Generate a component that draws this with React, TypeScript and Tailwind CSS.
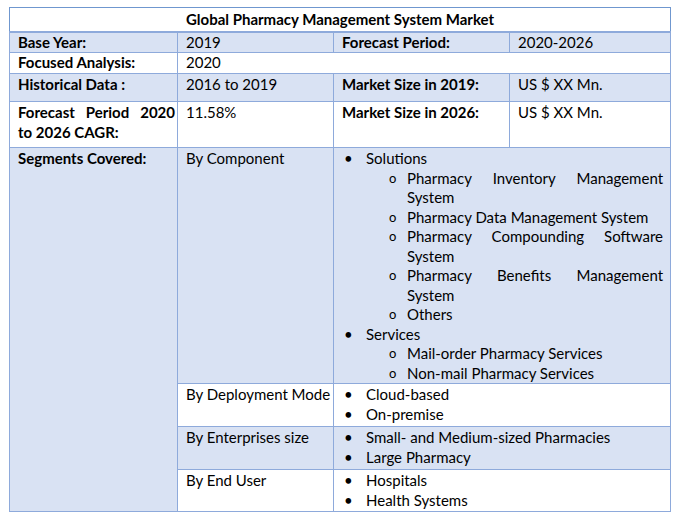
const border = 'border border-[#8eaadb]';

type Item = { text: string; sub?: string[] };

const segments: { name: string; blue: boolean; items: Item[] }[] = [
  {
    name: 'By Component',
    blue: true,
    items: [
      {
        text: 'Solutions',
        sub: [
          'Pharmacy Inventory Management System',
          'Pharmacy Data Management System',
          'Pharmacy Compounding Software System',
          'Pharmacy Benefits Management System',
          'Others',
        ],
      },
      { text: 'Services', sub: ['Mail-order Pharmacy Services', 'Non-mail Pharmacy Services'] },
    ],
  },
  { name: 'By Deployment Mode', blue: false, items: [{ text: 'Cloud-based' }, { text: 'On-premise' }] },
  {
    name: 'By Enterprises size',
    blue: true,
    items: [{ text: 'Small- and Medium-sized Pharmacies' }, { text: 'Large Pharmacy' }],
  },
  { name: 'By End User', blue: false, items: [{ text: 'Hospitals' }, { text: 'Health Systems' }] },
];

function BulletList({ items }: { items: Item[] }) {
  return (
    <div>
      {items.map((item) => (
        <div key={item.text}>
          <div className="flex">
            <span className="w-[24px] pl-[2px] shrink-0">•</span>
            <span>{item.text}</span>
          </div>
          {item.sub?.map((s) => (
            <div key={s} className="flex">
              <span className="w-[65px] pl-[47px] shrink-0 text-[13px]">o</span>
              <span className="text-justify flex-1">{s}</span>
            </div>
          ))}
        </div>
      ))}
    </div>
  );
}

export default function App() {
  return (
    <div className="bg-white min-h-screen pt-[7px] pl-[9px] text-black font-['Lato','Liberation_Sans',sans-serif] text-[15px] leading-[19.5px]">
      <table className="w-[661px] table-fixed border-collapse">
        <colgroup>
          <col className="w-[168px]" />
          <col className="w-[156px]" />
          <col className="w-[176px]" />
          <col className="w-[161px]" />
        </colgroup>
        <tbody>
          <tr>
            <td colSpan={4} className="border border-[#6f97cf] border-b-2 border-b-[#8eaadb] text-center font-bold pt-[2px] pb-[1px]">
              Global Pharmacy Management System Market
            </td>
          </tr>
          <tr className="bg-[#d9e2f3]">
            <td className={`${border} px-[8px] font-bold`}>Base Year:</td>
            <td className={`${border} px-[8px]`}>2019</td>
            <td className={`${border} px-[8px] font-bold`}>Forecast Period:</td>
            <td className={`${border} px-[8px]`}>2020-2026</td>
          </tr>
          <tr>
            <td className={`${border} px-[8px] font-bold`}>Focused Analysis:</td>
            <td colSpan={3} className={`${border} px-[8px]`}>2020</td>
          </tr>
          <tr className="bg-[#d9e2f3] align-top">
            <td className={`${border} px-[8px] pt-[1px] pb-[7px] font-bold`}>Historical Data :</td>
            <td className={`${border} px-[8px] pt-[1px] pb-[7px]`}>2016 to 2019</td>
            <td className={`${border} px-[8px] pt-[1px] pb-[7px] font-bold`}>Market Size in 2019:</td>
            <td className={`${border} px-[8px] pt-[1px] pb-[7px]`}>US $ XX Mn.</td>
          </tr>
          <tr className="align-top">
            <td className={`${border} px-[8px] pt-[1px] pb-[5px] font-bold text-justify [text-align-last:left]`}>
              Forecast&nbsp;&nbsp;&nbsp;Period&nbsp;&nbsp;&nbsp;2020 to 2026 CAGR:
            </td>
            <td className={`${border} px-[8px] pt-[1px] pb-[5px]`}>11.58%</td>
            <td className={`${border} px-[8px] pt-[1px] pb-[5px] font-bold`}>Market Size in 2026:</td>
            <td className={`${border} px-[8px] pt-[1px] pb-[5px]`}>US $ XX Mn.</td>
          </tr>
          {segments.map((seg, i) => {
            const pad = i === 0 ? 'pt-[1px] pb-0' : i === 3 ? 'pt-[1px] pb-[1px]' : 'pt-[1px] pb-[2px]';
            const bg = seg.blue ? 'bg-[#d9e2f3]' : 'bg-white';
            return (
              <tr key={seg.name} className="align-top">
                {i === 0 && (
                  <td rowSpan={4} className={`${border} px-[8px] pt-[1px] font-bold bg-[#d9e2f3]`}>
                    Segments Covered:
                  </td>
                )}
                <td className={`${border} pl-[8px] pr-0 whitespace-nowrap ${pad} ${bg}`}>{seg.name}</td>
                <td colSpan={2} className={`${border} pl-[8px] pr-[7px] ${pad} ${bg}`}>
                  <BulletList items={seg.items} />
                </td>
              </tr>
            );
          })}
        </tbody>
      </table>
    </div>
  );
}
